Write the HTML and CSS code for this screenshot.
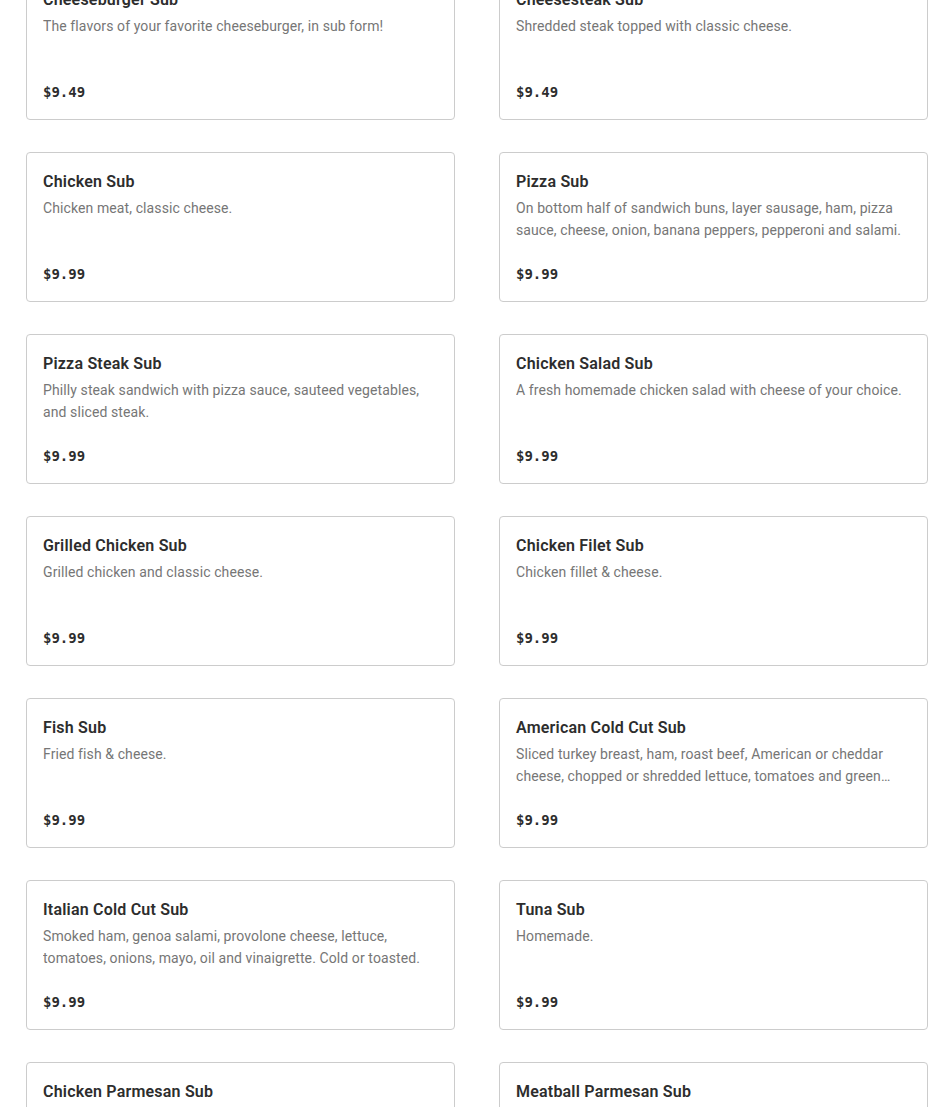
FILE: index.html
```html
<!DOCTYPE html>
<html>
<head>
<meta charset="utf-8">
<link rel="stylesheet" href="styles.css">
</head>
<body>
<div class="menu">
  <div class="card"><div class="title">Cheeseburger Sub</div><div class="desc">The flavors of your favorite cheeseburger, in sub form!</div><div class="price">$9.49</div></div>
  <div class="card"><div class="title">Cheesesteak Sub</div><div class="desc">Shredded steak topped with classic cheese.</div><div class="price">$9.49</div></div>
  <div class="card"><div class="title">Chicken Sub</div><div class="desc">Chicken meat, classic cheese.</div><div class="price">$9.99</div></div>
  <div class="card"><div class="title">Pizza Sub</div><div class="desc">On bottom half of sandwich buns, layer sausage, ham, pizza sauce, cheese, onion, banana peppers, pepperoni and salami.</div><div class="price">$9.99</div></div>
  <div class="card"><div class="title">Pizza Steak Sub</div><div class="desc">Philly steak sandwich with pizza sauce, sauteed vegetables, and sliced steak.</div><div class="price">$9.99</div></div>
  <div class="card"><div class="title">Chicken Salad Sub</div><div class="desc">A fresh homemade chicken salad with cheese of your choice.</div><div class="price">$9.99</div></div>
  <div class="card"><div class="title">Grilled Chicken Sub</div><div class="desc">Grilled chicken and classic cheese.</div><div class="price">$9.99</div></div>
  <div class="card"><div class="title">Chicken Filet Sub</div><div class="desc">Chicken fillet &amp; cheese.</div><div class="price">$9.99</div></div>
  <div class="card"><div class="title">Fish Sub</div><div class="desc">Fried fish &amp; cheese.</div><div class="price">$9.99</div></div>
  <div class="card"><div class="title">American Cold Cut Sub</div><div class="desc">Sliced turkey breast, ham, roast beef, American or cheddar cheese, chopped or shredded lettuce, tomatoes and green peppers, onions, mayo, oil and vinaigrette.</div><div class="price">$9.99</div></div>
  <div class="card"><div class="title">Italian Cold Cut Sub</div><div class="desc">Smoked ham, genoa salami, provolone cheese, lettuce, tomatoes, onions, mayo, oil and vinaigrette. Cold or toasted.</div><div class="price">$9.99</div></div>
  <div class="card"><div class="title">Tuna Sub</div><div class="desc">Homemade.</div><div class="price">$9.99</div></div>
  <div class="card"><div class="title">Chicken Parmesan Sub</div><div class="desc">Breaded chicken, marinara sauce and parmesan cheese.</div><div class="price">$9.99</div></div>
  <div class="card"><div class="title">Meatball Parmesan Sub</div><div class="desc">Meatballs, marinara sauce and parmesan cheese.</div><div class="price">$9.99</div></div>
</div>
</body>
</html>
```
FILE: styles.css
```css
html, body {
  margin: 0;
  padding: 0;
  background: #ffffff;
  overflow: hidden;
}
body {
  font-family: Roboto, "Liberation Sans", Arial, sans-serif;
  color: #2d2d2d;
}
.menu {
  display: grid;
  grid-template-columns: 429px 429px;
  column-gap: 44px;
  row-gap: 32px;
  margin-top: -30px;
  padding-left: 26px;
}
.card {
  box-sizing: border-box;
  height: 150px;
  border: 1px solid #cccccc;
  border-radius: 4px;
  padding: 16px 14px 17px 16px;
  display: flex;
  flex-direction: column;
}
.title {
  margin-top: 1px;
  font-size: 16px;
  line-height: 24px;
  font-weight: 600;
  letter-spacing: 0.2px;
  color: #2d2d2d;
}
.desc {
  margin-top: 3px;
  font-size: 14px;
  line-height: 22px;
  letter-spacing: 0.1px;
  color: #767676;
  display: -webkit-box;
  -webkit-line-clamp: 2;
  -webkit-box-orient: vertical;
  overflow: hidden;
}
.price {
  margin-top: auto;
  font-family: "DejaVu Sans Mono", "Liberation Mono", monospace;
  font-weight: bold;
  font-size: 14px;
  line-height: 20px;
  color: #2d2d2d;
}
```
